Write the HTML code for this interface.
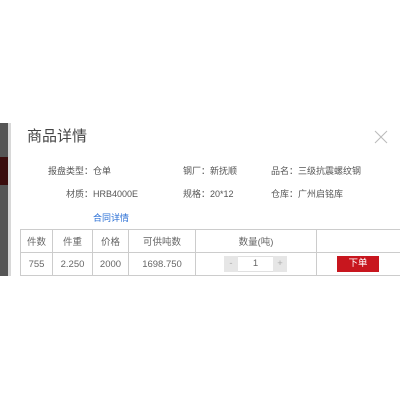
<!DOCTYPE html>
<html><head><meta charset="utf-8"><style>
*{margin:0;padding:0;box-sizing:border-box}
body{width:400px;height:400px;background:#fff;position:relative;overflow:hidden;font-family:"Liberation Sans","Noto Sans CJK SC",sans-serif;color:#555;font-size:9.5px}
.a{position:absolute;white-space:nowrap;line-height:14px}
.r{position:absolute;white-space:nowrap;line-height:14px;font-size:9px}
.l{position:absolute;white-space:nowrap;text-align:right;width:64px;line-height:14px;font-size:9px}
table{position:absolute;left:20px;top:229px;border-collapse:collapse;width:390px}
td{border:1px solid #ccc;height:23px;text-align:center;color:#666;font-size:9.5px}
</style></head><body>
<div class="a" style="left:0;top:123px;width:8px;height:153px;background:#555"></div>
<div class="a" style="left:0;top:157px;width:8px;height:28px;background:#3a0d0d"></div>
<div class="a" style="left:8px;top:123px;width:3px;height:153px;background:#d8d8d8"></div>
<div class="a" style="left:27px;top:127px;font-size:15px;line-height:20px;color:#444">商品详情</div>
<svg class="a" style="left:374px;top:130px" width="14" height="14"><path d="M1 1L13 13M13 1L1 13" stroke="#bbb" stroke-width="1"/></svg>
<div class="l" style="left:29px;top:164px">报盘类型：</div><div class="r" style="left:93px;top:164px">仓单</div>
<div class="l" style="left:146px;top:164px">钢厂：</div><div class="r" style="left:210px;top:164px">新抚顺</div>
<div class="l" style="left:234px;top:164px">品名：</div><div class="r" style="left:298px;top:164px">三级抗震螺纹钢</div>
<div class="l" style="left:29px;top:187px">材质：</div><div class="r" style="left:93px;top:187px">HRB4000E</div>
<div class="l" style="left:146px;top:187px">规格：</div><div class="r" style="left:210px;top:187px">20*12</div>
<div class="l" style="left:234px;top:187px">仓库：</div><div class="r" style="left:298px;top:187px">广州启铭库</div>
<div class="r" style="left:93px;top:211px;color:#2a6fd6">合同详情</div>
<table><tr><td style="width:32px">件数</td><td style="width:40px">件重</td><td style="width:36px">价格</td><td style="width:67px">可供吨数</td><td style="width:121px">数量(吨)</td><td></td></tr>
<tr><td>755</td><td>2.250</td><td>2000</td><td>1698.750</td><td></td><td></td></tr></table>
<div class="a" style="left:224px;top:256px;width:63px;height:16px;border:1px solid #e0e0e0;background:#fff"></div>
<div class="a" style="left:224px;top:256px;width:14px;height:16px;background:#e6e6e6;color:#aaa;text-align:center;line-height:16px">-</div>
<div class="a" style="left:273px;top:256px;width:14px;height:16px;background:#e6e6e6;color:#aaa;text-align:center;line-height:16px">+</div>
<div class="a" style="left:238px;top:256px;width:35px;line-height:16px;text-align:center;color:#666">1</div>
<div class="a" style="left:337px;top:256px;width:42px;height:16px;background:#c8161e;color:#fff;text-align:center;line-height:16px">下单</div>
</body></html>
